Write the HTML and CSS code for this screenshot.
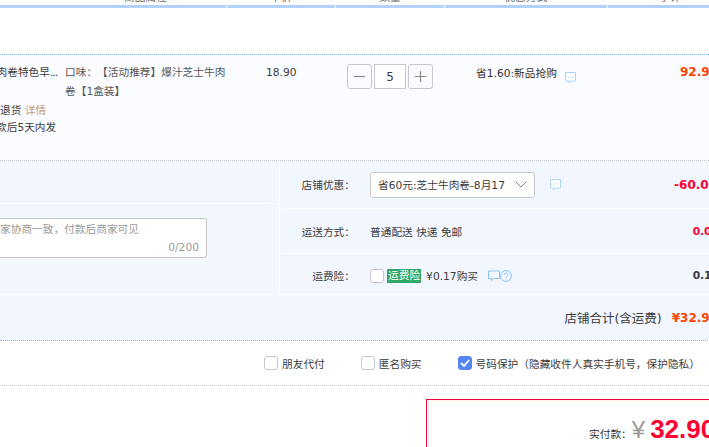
FILE: index.html
```html
<!DOCTYPE html>
<html lang="zh-CN">
<head>
    <meta charset="UTF-8">
    <title>确认订单</title>
    <link rel="stylesheet" href="styles.css">
</head>
<body>
    <div class="page">
        <div class="table-head">
            <div class="head-cell head-attr"><span>商品属性</span></div>
            <div class="head-cell head-price"><span>单价</span></div>
            <div class="head-cell head-qty"><span>数量</span></div>
            <div class="head-cell head-promo"><span>优惠方式</span></div>
            <div class="head-cell head-sum"><span>小计</span></div>
        </div>

        <div class="item">
            <div class="item-info">
                <div class="item-title">肉卷特色早<span class="dots">...</span></div>
                <div class="item-return"><span>退货</span> <span class="link-tan">详情</span></div>
                <div class="item-ship">款后5天内发</div>
            </div>
            <div class="item-attr">口味：【活动推荐】爆汁芝士牛肉卷【1盒装】</div>
            <div class="item-price">18.90</div>
            <div class="item-qty">
                <button class="qty-btn">
                    <svg width="13" height="13" viewBox="0 0 13 13"><path d="M1 6.500h11" stroke="#8a8a8a" stroke-width="1.200"/></svg>
                </button>
                <div class="qty-input">5</div>
                <button class="qty-btn">
                    <svg width="13" height="13" viewBox="0 0 13 13"><path d="M1 6.500h11M6.500 1v11" stroke="#8a8a8a" stroke-width="1.200"/></svg>
                </button>
            </div>
            <div class="item-promo">
                <span>省1.60:新品抢购</span>
                <svg class="chat-icon" width="11" height="12" viewBox="0 0 11 12"><path d="M1 .5h9a.5.5 0 0 1 .5.5v7.500a.5.5 0 0 1-.5.5H6L4 11V9H1a.5.5 0 0 1-.5-.5V1A.5.5 0 0 1 1 .5z" fill="#fff" stroke="#a9d3f7"/><path d="M3 5h1M5 5h1M7 5h1" stroke="#a9d3f7"/></svg>
            </div>
            <div class="item-sum">92.90</div>
        </div>

        <div class="order">
            <div class="order-left">
                <div class="left-top"></div>
                <div class="left-bottom">
                    <div class="memo">
                        <div class="memo-text">家协商一致，付款后商家可见</div>
                        <div class="memo-count">0/200</div>
                    </div>
                </div>
            </div>
            <div class="order-right">
                <div class="order-row row-coupon">
                    <div class="row-label">店铺优惠：</div>
                    <div class="row-main">
                        <div class="coupon-select">
                            <span>省60元:芝士牛肉卷-8月17</span>
                            <svg width="12" height="7" viewBox="0 0 12 7"><path d="M.5.5 6 6l5.500-5.500" fill="none" stroke="#888"/></svg>
                        </div>
                        <svg class="chat-icon" width="11" height="12" viewBox="0 0 11 12"><path d="M1 .5h9a.5.5 0 0 1 .5.5v7.500a.5.5 0 0 1-.5.5H6L4 11V9H1a.5.5 0 0 1-.5-.5V1A.5.5 0 0 1 1 .5z" fill="#fff" stroke="#a9d3f7"/><path d="M3 5h1M5 5h1M7 5h1" stroke="#a9d3f7"/></svg>
                    </div>
                    <div class="row-amount amount-red amount-big">-60.00</div>
                </div>
                <div class="order-row row-ship">
                    <div class="row-label">运送方式：</div>
                    <div class="row-main">普通配送 快递 免邮</div>
                    <div class="row-amount amount-red">0.00</div>
                </div>
                <div class="order-row row-ins">
                    <div class="row-label">运费险：</div>
                    <div class="row-main">
                        <span class="check"></span>
                        <span class="ins-tag">运费险</span>
                        <span class="ins-price">¥0.17购买</span>
                        <svg class="ins-chat" width="12" height="12" viewBox="0 0 12 12"><path d="M.5 1h11v7.500H5.500l-2 2v-2h-3z" fill="none" stroke="#8cc4f5"/></svg>
                        <svg width="12" height="12" viewBox="0 0 12 12"><circle cx="6" cy="6" r="5.400" fill="none" stroke="#8cc4f5"/><path d="M4.300 4.800a1.700 1.700 0 1 1 2.600 1.400c-.6.400-.9.700-.9 1.300M6 8.200v1.100" fill="none" stroke="#8cc4f5"/></svg>
                    </div>
                    <div class="row-amount amount-dark">0.17</div>
                </div>
            </div>
        </div>

        <div class="shop-total">
            <span>店铺合计(含运费)</span>
            <span class="total-value">¥32.90</span>
        </div>

        <div class="options">
            <label class="option"><span class="check"></span>朋友代付</label>
            <label class="option"><span class="check"></span>匿名购买</label>
            <label class="option">
                <span class="check check-on">
                    <svg width="10" height="8" viewBox="0 0 10 8"><path d="M1 4l3 3 5-6" fill="none" stroke="#fff" stroke-width="1.800"/></svg>
                </span>
                号码保护（隐藏收件人真实手机号，保护隐私）
            </label>
        </div>

        <div class="pay-wrap">
            <div class="pay-box">
                <span class="pay-label">实付款：</span>
                <span class="pay-yen">¥</span>
                <span class="pay-value">32.90</span>
            </div>
        </div>
    </div>
</body>
</html>
```

FILE: styles.css
```css
html, body {
    margin: 0;
    padding: 0;
    background-color: #ffffff;
}
.page {
    width: 709px;
    height: 447px;
    overflow: hidden;
    font-family: 'DejaVu Sans', 'Noto Sans CJK SC', sans-serif;
    font-size: 10.7px;
    color: #3c3c3c;
    text-spacing-trim: space-all;
}
button {
    font-family: inherit;
    padding: 0;
}

/* table head, mostly scrolled out of view */
.table-head {
    display: flex;
    gap: 1px;
    height: 8px;
    margin-right: -100px;
}
.head-cell {
    height: 5px;
    border-bottom: 3px solid #b2d1ff;
    overflow: hidden;
    text-align: center;
    color: #6c6c6c;
}
.head-cell span {
    display: block;
    margin-top: -10px;
    line-height: 16px;
}
.head-attr { width: 226px; }
.head-attr span { margin-left: 65px; }
.head-price { width: 108px; }
.head-qty { width: 108px; }
.head-promo { width: 162px; }
.head-sum { width: 150px; }
.head-sum span { margin-right: 26px; }

.item {
    display: flex;
    height: 107px;
    margin-top: 46px;
    box-sizing: border-box;
    border-top: 1px dotted #80b2ff;
    border-bottom: 1px dotted #c8c8c8;
    padding-top: 8px;
    background-color: #fbfcff;
    line-height: 19px;
}
.item-info {
    width: 65px;
    flex-shrink: 0;
    overflow: hidden;
    white-space: nowrap;
}
.item-title {
    margin-left: -3.500px;
}
.dots {
    letter-spacing: -1px;
}
.item-return {
    margin-top: 19px;
}
.item-ship {
    margin-top: -1px;
    margin-left: -4px;
    line-height: 17px;
}
.link-tan {
    color: #c69a6e;
}
.item-attr {
    width: 166px;
    height: 38px;
    flex-shrink: 0;
    box-sizing: border-box;
    padding-right: 4px;
    color: #565656;
}
.item-price {
    width: 116px;
    flex-shrink: 0;
    padding-left: 35px;
    box-sizing: border-box;
}
.item-qty {
    display: flex;
    gap: 2px;
    width: 129px;
    height: 25px;
    margin-top: 1px;
    flex-shrink: 0;
}
.qty-btn {
    display: flex;
    align-items: center;
    justify-content: center;
    width: 25px;
    height: 25px;
    border: 1px solid #c6c6d0;
    border-radius: 3px;
    background-color: #fbfcff;
}
.qty-input {
    width: 32px;
    height: 25px;
    box-sizing: border-box;
    border: 1px solid #c6c6d0;
    background-color: #ffffff;
    text-align: center;
    line-height: 24px;
    font-size: 12px;
}
.item-promo {
    display: flex;
    align-items: flex-start;
    gap: 8px;
    width: 204px;
    margin-top: 1px;
    flex-shrink: 0;
    color: #333;
}
.chat-icon {
    margin-top: 8px;
    flex-shrink: 0;
}
.item-sum {
    font-size: 12px;
    font-weight: bold;
    color: #ff4400;
    white-space: nowrap;
}

/* shop summary block */
.order {
    display: flex;
    height: 133px;
    background-color: #f1f6ff;
}
.order-left {
    width: 279px;
    flex-shrink: 0;
    border-right: 1px solid #ffffff;
}
.left-top {
    height: 42px;
    border-bottom: 1px solid #ffffff;
}
.left-bottom {
    padding-top: 14px;
}
.memo {
    width: 206px;
    height: 38px;
    border: 1px solid #c8c8c8;
    border-left: 0;
    border-radius: 0 3px 3px 0;
    background-color: #ffffff;
    color: #9a9a9a;
    white-space: nowrap;
}
.memo-text {
    line-height: 22px;
}
.memo-count {
    text-align: right;
    padding-right: 7px;
    line-height: 14px;
}
.order-right {
    width: 437px;
    flex-shrink: 0;
}
.order-row {
    display: flex;
    align-items: center;
    border-bottom: 1px solid #ffffff;
    white-space: nowrap;
}
.row-coupon { height: 47px; }
.row-ship { height: 44px; }
.row-ins {
    height: 37px;
    padding-top: 3px;
    border-bottom: 0;
}
.row-label {
    width: 75px;
    flex-shrink: 0;
    text-align: right;
}
.row-main {
    display: flex;
    align-items: center;
    flex: 1;
    margin-left: 15px;
}
.coupon-select {
    display: flex;
    align-items: center;
    justify-content: space-between;
    box-sizing: border-box;
    width: 165px;
    height: 26px;
    padding: 0 7px 0 7px;
    border: 1px solid #c8c8c8;
    border-radius: 3px;
    background-color: #ffffff;
}
.row-coupon .chat-icon {
    margin: 0 0 0 15px;
}
.row-amount {
    font-weight: bold;
    margin-right: -2px;
}
.amount-red { color: #ff0033; }
.amount-big {
    font-size: 12px;
    margin-right: 0;
}
.amount-dark { color: #3c3c3c; }

.check {
    display: inline-flex;
    align-items: center;
    justify-content: center;
    width: 12px;
    height: 12px;
    flex-shrink: 0;
    border: 1px solid #c6c6d0;
    border-radius: 3px;
    background-color: #ffffff;
}
.check-on {
    border-color: #5585f5;
    background-color: #5585f5;
}
.ins-tag {
    margin-left: 3px;
    padding: 0 1px;
    background-color: #31a86a;
    color: #ffffff;
    line-height: 14px;
}
.ins-price {
    margin-left: 5px;
}
.ins-chat {
    margin-left: 10px;
}

.shop-total {
    display: flex;
    justify-content: flex-end;
    align-items: center;
    gap: 10px;
    height: 47px;
    box-sizing: border-box;
    margin-right: -9px;
    border-top: 1px solid #ffffff;
    border-bottom: 1px dotted #80b2ff;
    background-color: #f1f6ff;
    font-size: 12.500px;
    white-space: nowrap;
}
.total-value {
    font-size: 12px;
    font-weight: bold;
    color: #ff4400;
}

.options {
    display: flex;
    height: 45px;
    box-sizing: border-box;
    padding-left: 264px;
    align-items: center;
    border-bottom: 1px dotted #c8c8c8;
    white-space: nowrap;
}
.option {
    display: flex;
    align-items: center;
    gap: 4px;
    margin-right: 36px;
}
.pay-wrap {
    padding: 13px 0 0 426px;
}
.pay-box {
    display: flex;
    align-items: baseline;
    width: 300px;
    height: 60px;
    box-sizing: border-box;
    padding: 14px 0 0 162px;
    border: 1px solid #e8063a;
    box-shadow: inset 0 0 0 2px #fff5f0;
    white-space: nowrap;
}
.pay-label {
    color: #333;
}
.pay-yen {
    margin-right: 5px;
    font-family: 'Liberation Sans', sans-serif;
    font-size: 24px;
    color: #9a9a9a;
}
.pay-value {
    font-family: 'Liberation Sans', sans-serif;
    font-size: 26px;
    font-weight: bold;
    color: #ff0033;
}
```
